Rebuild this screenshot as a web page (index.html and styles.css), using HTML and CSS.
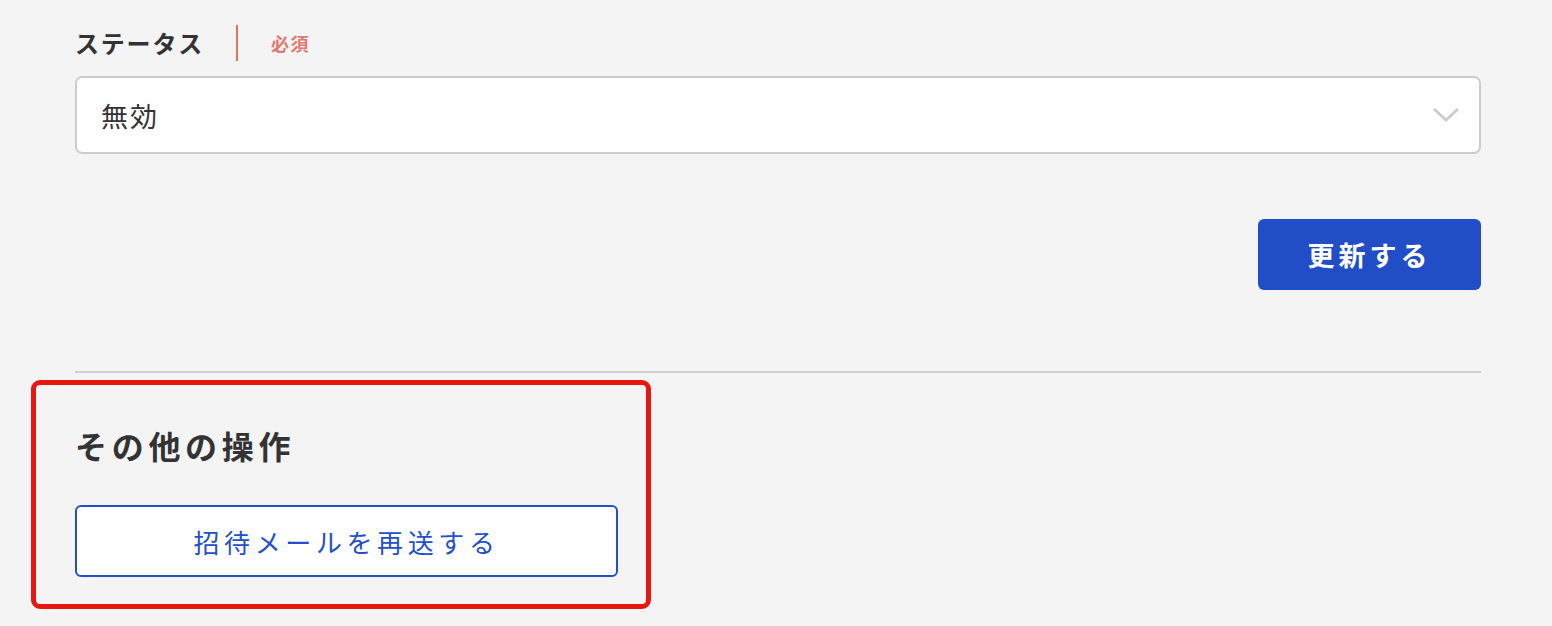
FILE: index.html
```html
<!DOCTYPE html>
<html lang="ja">
<head>
<meta charset="utf-8">
<link rel="stylesheet" href="styles.css">
</head>
<body>
<div class="page">
  <div class="field-label">
    <span class="label-text">ステータス</span>
    <span class="divider"></span>
    <span class="required">必須</span>
  </div>
  <div class="select">
    <span class="select-value">無効</span>
    <svg class="chevron" width="28" height="16" viewBox="0 0 28 16"><path d="M2 2 L14 13 L26 2" fill="none" stroke="#cccccc" stroke-width="3"/></svg>
  </div>
  <div class="actions">
    <button class="primary">更新する</button>
  </div>
  <hr class="rule">
  <section class="other">
    <h2 class="other-title">その他の操作</h2>
    <button class="secondary">招待メールを再送する</button>
    <div class="highlight"></div>
  </section>
</div>
</body>
</html>
```
FILE: styles.css
```css
html, body {
  margin: 0;
  padding: 0;
  background: #f4f4f4;
}
body {
  font-family: "Noto Sans CJK JP", "Noto Sans", sans-serif;
  color: #333333;
}
.page {
  padding: 25px 71px 49px 75px;
}
.field-label {
  display: flex;
  align-items: center;
  height: 36px;
}
.label-text {
  font-size: 24px;
  font-weight: 700;
  letter-spacing: 1.8px;
  line-height: 36px;
}
.divider {
  width: 2px;
  height: 36px;
  background: #e07366;
  margin-left: 32px;
}
.required {
  margin-left: 33px;
  font-size: 18px;
  font-weight: 700;
  color: #e07a6e;
  letter-spacing: 1.5px;
}
.select {
  margin-top: 15px;
  height: 78px;
  box-sizing: border-box;
  border: 2px solid #cccccc;
  border-radius: 7px;
  background: #ffffff;
  display: flex;
  align-items: center;
  justify-content: space-between;
  padding: 0 19px 0 24px;
}
.select-value {
  font-size: 27px;
  letter-spacing: 2px;
  color: #333333;
}
.chevron {
  display: block;
}
.actions {
  display: flex;
  justify-content: flex-end;
  margin-top: 65px;
}
.primary {
  width: 223px;
  height: 71px;
  border: none;
  border-radius: 6px;
  background: #214ec7;
  color: #ffffff;
  font-family: inherit;
  font-size: 27px;
  font-weight: 700;
  letter-spacing: 4px;
  padding: 0;
}
.rule {
  margin: 81px 0 0 0;
  border: none;
  height: 2px;
  background: #d0d0d0;
}
.other {
  position: relative;
  padding-top: 52px;
}
.other-title {
  margin: 0;
  font-size: 32px;
  font-weight: 700;
  line-height: 40px;
  letter-spacing: 4.7px;
  color: #333333;
}
.secondary {
  display: block;
  margin-top: 40px;
  width: 543px;
  height: 72px;
  box-sizing: border-box;
  border: 2px solid #2350c8;
  border-radius: 6px;
  background: #ffffff;
  color: #2350c8;
  font-family: inherit;
  font-size: 26px;
  letter-spacing: 4.6px;
  padding: 0;
}
.highlight {
  position: absolute;
  left: -44px;
  top: 7px;
  width: 620px;
  height: 229px;
  box-sizing: border-box;
  border: 5px solid #e5170f;
  border-radius: 9px;
  pointer-events: none;
}
```
